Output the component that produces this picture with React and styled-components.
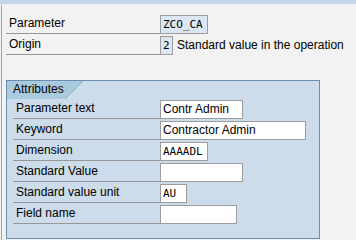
import styled, { createGlobalStyle } from 'styled-components';

const Global = createGlobalStyle`
    body {
        margin: 0;
        background: #f2f2f2;
        font-family: "Liberation Sans", Arial, sans-serif;
        font-size: 12px;
        color: #000;
    }
`;

const TopBand = styled.div`
    height: 4px;
    background: #c6d6e7;
    border-bottom: 1px solid #e4eef8;
`;

const Screen = styled.div`
    margin-left: 1px;
    border-left: 1px solid #a4a4a4;
    height: 235px;
    padding: 9px 0 0 4px;
    box-sizing: border-box;
`;

const Row = styled.div`
    display: flex;
    align-items: flex-end;
    height: 21px;
    padding-bottom: 1px;
    box-sizing: border-box;
`;

const Label = styled.div`
    width: ${({ $w }) => $w}px;
    margin-left: ${({ $ml }) => $ml || 0}px;
    height: 20px;
    line-height: 19px;
    padding-left: 3px;
    box-sizing: border-box;
    border-bottom: 1px solid #979797;
    white-space: nowrap;
`;

const Field = styled.div`
    width: ${({ $w }) => $w}px;
    height: 19px;
    box-sizing: border-box;
    border: 1px solid #9c9c9c;
    background: ${({ $ro }) => ($ro ? '#dbe7f4' : '#fff')};
    padding-left: 2px;
    line-height: 17px;
    white-space: nowrap;
    overflow: hidden;
    font-family: ${({ $mono }) => ($mono ? '"DejaVu Sans Mono", "Liberation Mono", monospace' : '"Liberation Sans", Arial, sans-serif')};
    font-size: ${({ $mono }) => ($mono ? '11px' : '12px')};
`;

const Desc = styled.span`
    margin-left: 4px;
    line-height: 19px;
    white-space: nowrap;
`;

const Group = styled.div`
    margin-top: 24px;
    width: 314px;
    box-sizing: border-box;
    border: 1px solid #6b8db3;
    background: #ccdcea;
    padding-bottom: 13px;
`;

const Tab = styled.div`
    width: 76px;
    height: 18px;
    line-height: 17px;
    padding-left: 6px;
    box-sizing: border-box;
    background: linear-gradient(to bottom right, #aacbdd 0%, #aacbdd 50%, transparent 50%) right / 18px 18px no-repeat,
        linear-gradient(#aacbdd, #aacbdd) left / 58px 18px no-repeat;
    position: relative;
`;

const TabEdge = styled.svg`
    position: absolute;
    right: 0;
    top: 0;
`;

const top = [
    { label: 'Parameter', w: 48, value: 'ZCO_CA', mono: true, ro: true },
    { label: 'Origin', w: 13, value: '2', mono: true, ro: true, desc: 'Standard value in the operation' },
];

const attrs = [
    { label: 'Parameter text', w: 83, value: 'Contr Admin' },
    { label: 'Keyword', w: 146, value: 'Contractor Admin' },
    { label: 'Dimension', w: 48, value: 'AAAADL', mono: true },
    { label: 'Standard Value', w: 83, value: '' },
    { label: 'Standard value unit', w: 27, value: 'AU', mono: true },
    { label: 'Field name', w: 77, value: '' },
];

export default function App() {
    return (
        <>
            <Global />
            <TopBand />
            <Screen>
                {top.map((r) => (
                    <Row key={r.label}>
                        <Label $w={154}>{r.label}</Label>
                        <Field $w={r.w} $mono={r.mono} $ro={r.ro}>{r.value}</Field>
                        {r.desc && <Desc>{r.desc}</Desc>}
                    </Row>
                ))}
                <Group>
                    <Tab>
                        Attributes
                        <TabEdge width="18" height="18" viewBox="0 0 18 18">
                            <line x1="17.5" y1="0" x2="0" y2="18" stroke="#8fb0c6" strokeWidth="1" />
                        </TabEdge>
                    </Tab>
                    {attrs.map((r) => (
                        <Row key={r.label}>
                            <Label $w={147} $ml={6}>{r.label}</Label>
                            <Field $w={r.w} $mono={r.mono}>{r.value}</Field>
                        </Row>
                    ))}
                </Group>
            </Screen>
        </>
    );
}
